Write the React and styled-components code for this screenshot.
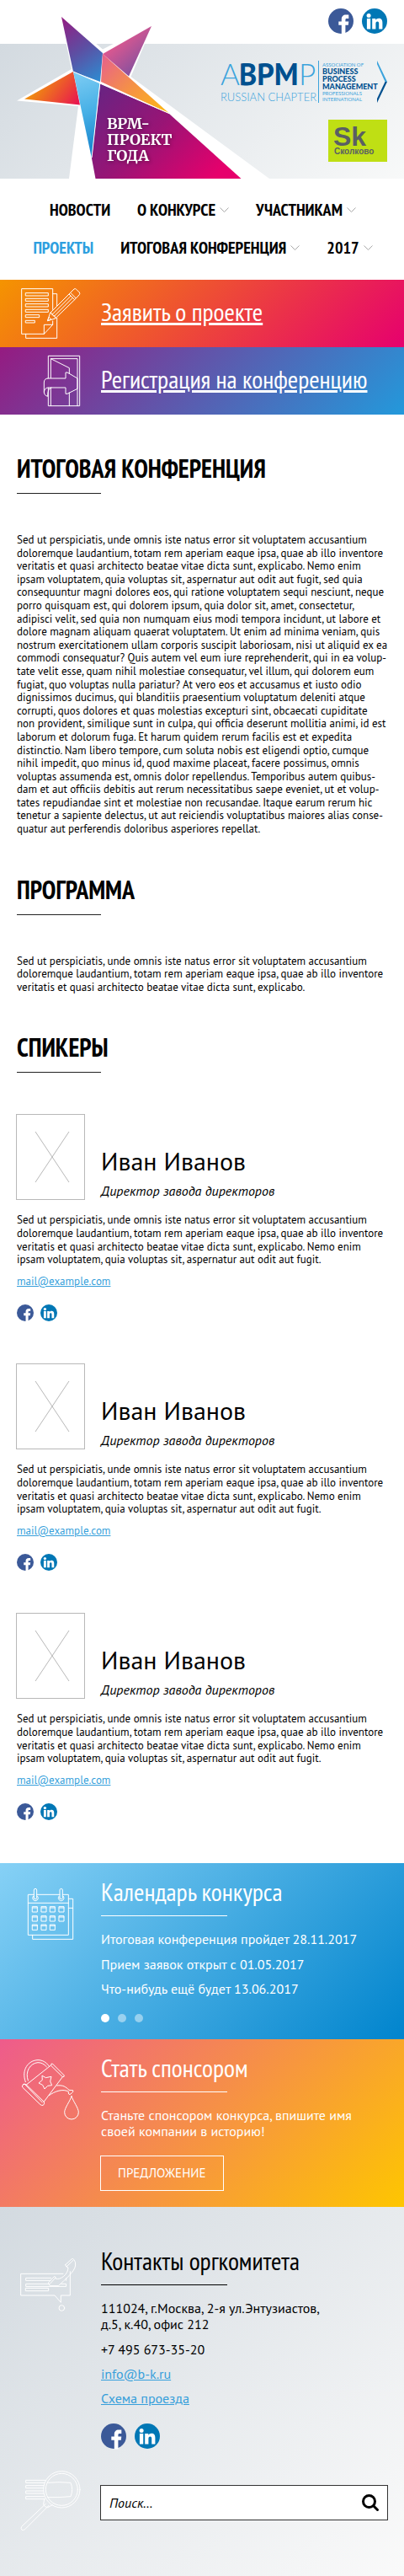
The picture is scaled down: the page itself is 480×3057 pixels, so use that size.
import React from "react";
import styled, { createGlobalStyle } from "styled-components";

const sans = `"PT Sans", "Noto Sans", "Liberation Sans", sans-serif`;
const narrow = `"PT Sans Narrow", "PT Sans", "Noto Sans", sans-serif`;
const serif = `Merriweather, "PT Serif", "DejaVu Serif", serif`;

const GlobalStyle = createGlobalStyle`
  *, *::before, *::after { box-sizing: border-box; }
  body { margin: 0; background: #fff; color: #000; font: 13px/1.2 ${sans}; text-rendering: optimizeLegibility; }
  h1, h2, h3, p, ul { margin: 0; padding: 0; }
  ul { list-style: none; }
  svg { display: block; overflow: visible; }
`;

const Header = styled.header`
  position: relative;
`;
const TopBar = styled.div`
  display: flex;
  justify-content: flex-end;
  padding: 10px 20px 12px;
`;
const Hero = styled.div`
  display: flex;
  flex-direction: column;
  align-items: flex-end;
  gap: 20px;
  padding: 20px;
  background: linear-gradient(135deg, #d3dae0, #f8f9f9);
`;
const Brand = styled.a`
  position: absolute;
  left: 20px;
  bottom: 0;
`;
const SocialList = styled.ul`
  display: flex;
  gap: ${(p) => (p.$small ? 8 : 10)}px;
`;

const Nav = styled.nav`
  display: flex;
  flex-wrap: wrap;
  justify-content: center;
  gap: 21px 32px;
  padding: 25px 18px 26px 20px;
`;
const NavLink = styled.a`
  display: flex;
  align-items: center;
  gap: 5px;
  font: bold 20px/24px ${narrow};
  text-transform: uppercase;
  text-decoration: none;
  color: ${(p) => (p.$active ? "#2e9fdf" : "#000")};
`;

const IconCell = styled.div`
  flex: none;
  width: 120px;
  padding: ${(p) => p.$top || 0}px 20px 0;
  svg { fill: none; stroke: #fff; stroke-width: 3; stroke-linejoin: round; stroke-linecap: round; }
`;
const Band = styled.div`
  display: flex;
  height: 80px;
  background: linear-gradient(135deg, ${(p) => p.$from}, ${(p) => p.$to});
`;
const BandLink = styled.a`
  padding-top: 20px;
  font: 30px/36px ${narrow};
  color: #fff;
`;

const Section = styled.section`
  padding: 46px 16px 0 20px;
`;
const Title = styled.h2`
  font: bold 30px/36px ${narrow};
  text-transform: uppercase;
  &::after {
    content: "";
    display: block;
    width: 100px;
    height: 1px;
    margin-top: 11px;
    background: #222;
  }
`;
const Text = styled.p`
  margin-top: 47px;
`;
const Speakers = styled.div`
  display: flex;
  flex-direction: column;
  gap: 51px;
  padding: 50px 0 51px;
`;
const SpeakerCard = styled.article`
  display: flex;
  flex-direction: column;
`;
const SpeakerHead = styled.div`
  display: flex;
  align-items: flex-end;
  gap: 20px;
  margin-bottom: 17px;
`;
const Photo = styled.div`
  width: 80px;
  height: 100px;
  box-shadow: 0 0 0 1px #b8b8b8;
`;
const Name = styled.h3`
  margin-bottom: 8px;
  font: 30px/36px ${sans};
`;
const Role = styled.p`
  font: italic 16px/1.2 ${sans};
`;
const Mail = styled.a`
  align-self: flex-start;
  margin: 10px 0 20px;
  color: #369fdb;
`;

const Panel = styled.section`
  display: flex;
  padding: ${(p) => p.$top || 16}px 20px 20px 0;
  font-size: 16px;
  color: #fff;
  background: linear-gradient(135deg, ${(p) => p.$from}, ${(p) => p.$to});
`;
const PanelBody = styled.div`
  flex: 1;
  min-width: 0;
`;
const PanelTitle = styled.h2`
  margin-bottom: 18px;
  font: 30px/36px ${narrow};
  &::after {
    content: "";
    display: block;
    width: 150px;
    height: 1px;
    margin-top: 10px;
    background: currentColor;
  }
`;
const Lines = styled.div`
  display: flex;
  flex-direction: column;
  align-items: flex-start;
  gap: 10px;
  margin-bottom: 20px;
  a { color: #369fdb; }
`;
const Dots = styled.div`
  display: flex;
  gap: 10px;
`;
const Dot = styled.button`
  width: 10px;
  height: 10px;
  padding: 0;
  border: 0;
  border-radius: 50%;
  background: ${(p) => (p.$active ? "#fff" : "rgba(255, 255, 255, 0.45)")};
`;
const OfferButton = styled.button`
  height: 40px;
  padding: 0 20px;
  border: 0;
  background: none;
  box-shadow: 0 0 0 1px #fff;
  color: #fff;
  font: 15px/20px ${sans};
  text-transform: uppercase;
`;

const Footer = styled.footer`
  padding-bottom: 48px;
  color: #000;
  background: linear-gradient(135deg, #d3dae0, #fafafa);
`;
const FooterPanel = styled(Panel)`
  color: #000;
  background: none;
  padding-bottom: 24px;
`;
const SearchRow = styled.form`
  display: flex;
  align-items: center;
  padding-right: 20px;
`;
const SearchBox = styled.div`
  flex: 1;
  display: flex;
  align-items: center;
  height: 40px;
  padding: 0 10px;
  background: #fff;
  box-shadow: 0 0 0 1px #333;
`;
const SearchInput = styled.input`
  flex: 1;
  min-width: 0;
  padding: 0;
  border: 0;
  outline: 0;
  background: none;
  font: italic 16px/20px ${sans};
  color: #000;
  &::placeholder { color: #000; opacity: 1; }
`;
const SearchButton = styled.button`
  padding: 0;
  border: 0;
  background: none;
`;

const lorem =
  "Sed ut perspiciatis, unde omnis iste natus error sit voluptatem accusantium doloremque laudantium, totam rem aperiam eaque ipsa, quae ab illo inventore veritatis et quasi architecto beatae vitae dicta sunt, explicabo.";
const longLorem =
  lorem +
  " Nemo enim ipsam voluptatem, quia voluptas sit, aspernatur aut odit aut fugit, sed quia consequuntur magni dolores eos, qui ratione voluptatem sequi nesciunt, neque porro quisquam est, qui dolorem ipsum, quia dolor sit, amet, consectetur, adipisci velit, sed quia non numquam eius modi tempora incidunt, ut labore et dolore magnam aliquam quaerat voluptatem. Ut enim ad minima veniam, quis nostrum exercitationem ullam corporis suscipit laboriosam, nisi ut aliquid ex ea commodi consequatur? Quis autem vel eum iure reprehenderit, qui in ea volup\u00adtate velit esse, quam nihil molestiae consequatur, vel illum, qui dolorem eum fugiat, quo voluptas nulla pariatur? At vero eos et accusamus et iusto odio dignissimos ducimus, qui blanditiis praesentium voluptatum deleniti atque corrupti, quos dolores et quas molestias excepturi sint, obcaecati cupiditate non\u00a0provident, similique sunt in culpa, qui officia deserunt mollitia animi, id est laborum et dolorum fuga. Et harum quidem rerum facilis est et expedita distinctio. Nam libero tempore, cum soluta nobis est eligendi optio, cumque nihil impedit, quo minus id, quod maxime placeat, facere possimus, omnis voluptas assumenda est, omnis dolor repellendus. Temporibus autem quibus\u00addam et aut officiis debitis aut rerum necessitatibus saepe eveniet, ut et volup\u00adtates repudiandae sint et molestiae non recusandae. Itaque earum rerum hic tenetur a sapiente delectus, ut aut reiciendis voluptatibus maiores alias conse\u00adquatur aut perferendis doloribus asperiores repellat.";
const speakerBio = lorem + " Nemo enim ipsam voluptatem, quia voluptas sit, aspernatur aut odit aut fugit.";

const speakers = [1, 2, 3].map((id) => ({ id, name: "Иван Иванов", role: "Директор завода директоров", mail: "mail@example.com" }));

const menu = [
  { label: "Новости" },
  { label: "О конкурсе", sub: true },
  { label: "Участникам", sub: true },
  { label: "Проекты", active: true },
  { label: "Итоговая конференция", sub: true },
  { label: "2017", sub: true },
];

function Socials({ small }) {
  const size = small ? 20 : 30;
  return (
    <SocialList $small={small}>
      <li>
        <a href="#facebook" aria-label="Facebook">
          <svg width={size} height={size} viewBox="0 0 30 30">
            <circle cx="15" cy="15" r="15" fill="#3b5998" />
            <path fill="#fff" d="M15.8 30.5V19.7h-3.5v-4.2h3.5V13c0-3.6 2-5.5 5.2-5.5h3.3V12H22c-1.2 0-1.6.6-1.6 1.6v1.9h3.9l-.5 4.2h-3.4v10.8z" />
          </svg>
        </a>
      </li>
      <li>
        <a href="#linkedin" aria-label="LinkedIn">
          <svg width={size} height={size} viewBox="0 0 30 30">
            <circle cx="15" cy="15" r="15" fill="#0077b5" />
            <circle cx="8.1" cy="8.4" r="2.5" fill="#fff" />
            <path fill="#fff" d="M5.9 12.1h4.3v12.3H5.9zM12.2 12.1h4.1v1.7c.8-1.3 2.1-2 3.8-2 3.2 0 4.3 2.1 4.3 5.2v7.4h-4.2v-6.6c0-1.5-.5-2.4-1.8-2.4s-2 .9-2 2.4v6.6h-4.2z" />
          </svg>
        </a>
      </li>
    </SocialList>
  );
}

const Gradient = ({ id, box, stops }) => (
  <linearGradient id={id} gradientUnits="userSpaceOnUse" x1={box[0]} y1={box[1]} x2={box[2]} y2={box[3]}>
    {stops.map((c, i) => (
      <stop key={c} offset={i / (stops.length - 1)} stopColor={c} />
    ))}
  </linearGradient>
);

const BrandText = styled.text`
  font: bold 18px ${serif};
  fill: #fff;
  filter: drop-shadow(1px 1px 2px rgba(0, 0, 0, 0.4));
`;

function StarLogo() {
  return (
    <svg width="300" height="200" viewBox="20 12 300 200" role="img" aria-label="ВРМ-проект года">
      <defs>
        <Gradient id="top" box={[73, 20, 125, 95]} stops={["#951b81", "#5c4fa3", "#2b8fd4"]} />
        <Gradient id="right" box={[135, 50, 165, 85]} stops={["#e2588f", "#80509f"]} />
        <Gradient id="gold" box={[122, 64, 200, 134]} stops={["#e8608c", "#f59245", "#fdb913"]} />
        <Gradient id="left" box={[50, 95, 90, 125]} stops={["#f08a10", "#e8174f"]} />
        <Gradient id="blue" box={[88, 85, 120, 180]} stops={["#7fcdf4", "#47b0e6", "#1482cc"]} />
        <Gradient id="body" box={[115, 100, 240, 225]} stops={["#662483", "#991475", "#e6006c"]} />
      </defs>
      <path fill="#fff" d="M20 119.500 85 82 71 15 122 58.500 182 28 155.500 91 320 212H82l11-86z" />
      <path fill="url(#top)" d="M73 20 122 63 119 97 87 85z" />
      <path fill="url(#right)" d="M180 31 153 90.500 122 64z" />
      <path fill="url(#gold)" d="M122 64 201 134.500 120 97z" />
      <path fill="url(#left)" d="M29 117.500 87 85 95 124.500z" />
      <path fill="url(#blue)" d="M87 85 118.500 98.500 109 188z" />
      <path fill="url(#body)" d="M119 99.500 201 135 286.500 212H113.500L109 188z" />
      <path fill="none" stroke="#fff" strokeWidth="1" d="M87 85 201 134.500M119 97l-10 90" />
      <BrandText x="127" y="153">ВРМ-</BrandText>
      <BrandText x="127" y="172">ПРОЕКТ</BrandText>
      <BrandText x="127" y="191">ГОДА</BrandText>
    </svg>
  );
}

const LogoText = styled.text`
  font: ${(p) => p.$weight || 400} ${(p) => p.$size}px Lato, ${sans};
  fill: ${(p) => (p.$dark ? "#00508f" : "#3ba3dc")};
`;
const LogoMark = styled.text`
  font: bold 36px ${sans};
  fill: #00508f;
`;

function AbpmpLogo() {
  return (
    <svg width="197" height="50" viewBox="263 72 197 50" role="img" aria-label="ABPMP Russian Chapter">
      <LogoText $size={35} $weight={300} x="262" y="101">A</LogoText>
      <LogoMark x="284" y="101">BPM</LogoMark>
      <LogoText $size={35} $weight={300} x="355" y="101">P</LogoText>
      <LogoText $size={13} $weight={300} x="262" y="120">RUSSIAN CHAPTER</LogoText>
      <path stroke="#3ba3dc" d="M378.500 72v50" />
      <LogoText $size={6} x="383" y="79">ASSOCIATION OF</LogoText>
      <LogoText $size={9} $weight={900} $dark x="383" y="88">BUSINESS</LogoText>
      <LogoText $size={9} $weight={900} $dark x="383" y="97">PROCESS</LogoText>
      <LogoText $size={9} $weight={900} $dark x="383" y="106">MANAGEMENT</LogoText>
      <LogoText $size={6} x="383" y="113">PROFESSIONALS</LogoText>
      <LogoText $size={6} x="383" y="120">INTERNATIONAL</LogoText>
      <path fill="#3ba3dc" d="M448 72 460 97h-2.500L448 76z" />
      <path fill="#00508f" d="M460 97 448 122v-5l9.500-20z" />
    </svg>
  );
}

const SkText = styled.text`
  font: bold ${(p) => p.$size}px "Liberation Sans", sans-serif;
  fill: #5a5f63;
`;

function SkolkovoLogo() {
  return (
    <svg width="70" height="50" viewBox="0 0 70 50" role="img" aria-label="Сколково">
      <path fill="#bfdf14" d="M0 0h70v50H0z" />
      <SkText $size={32} x="6" y="31">Sk</SkText>
      <SkText $size={10} x="7" y="41">Сколково</SkText>
    </svg>
  );
}

const Chevron = () => (
  <svg width="11" height="8" viewBox="0 0 11 8" fill="none" stroke="#a8a8a8" aria-hidden="true">
    <path d="M.5 1.500l5 5 5-5" />
  </svg>
);

const Icon = ({ view, children }) => (
  <svg width="80" height="80" viewBox={view} aria-hidden="true">{children}</svg>
);

const ProjectIcon = () => (
  <Icon view="30 6 240 240">
    <path d="M158 112V38H47v161h80l31-33v-13M127 199v-33h31M158 56h15v42M173 142v72H62v-15" />
    <path d="M62 53h80v10H62zM62 73h80v9H62zM62 92h80v10H62zM62 112h80v9H62zM62 131h48v9H62zM62 151h32v8H62z" />
    <path d="M140 151l9-27 67-67 20 20-68 66zM149 124l5 1 3 7 7 2 4 9M156 130l66-66M162 137l67-67M216 57l5-5 20 20-5 5M221 52l13-13q4-3 8 1l11 11q3 4 0 8l-12 13M140 151l4-12 8 7z" />
  </Icon>
);
const DoorIcon = () => (
  <Icon view="30 246 240 240">
    <path d="M142 356v-79h112v178H142v-64M151 356v-69h95v168M151 391v64M151 287l66 33v20M217 408v47" />
    <path d="M141 357h63v-21h6l36 21v37l-36 18h-6v-22h-51q-13 2-13 31-13-3-13-16v-33q0-15 14-15M127 405q2-14 14-15h12" />
  </Icon>
);
const CalendarIcon = () => (
  <Icon view="30 0 240 240">
    <path d="M91 55H70v144h144V55h-21M101 55h82M70 85h144M214 70h16v144H86v-15M214 103h16" />
    {[96, 188].map((x) => (
      <g key={x}>
        <path d={`M${x - 5} 68V39q0-5 5-5t5 5v29q0 3-5 3t-5-3z`} />
        <path d={`M${x - 8} 61a10 10 0 1 0 16 0`} />
      </g>
    ))}
    {[98, 131, 162].map((y, row) =>
      [86, 118, 149, 181].slice(0, row === 2 ? 3 : 4).map((x) => <path key={`${x}-${y}`} d={`M${x} ${y}h17v19h-17zM${x} ${y + 4}h17`} />)
    )}
  </Icon>
);
const SponsorIcon = () => (
  <Icon view="30 627 240 240">
    <path d="M152 663q-1-8 5-6l42 42q1 6-5 5zM150 664l-86 68M193 704l-66 88" />
    <path d="M53 731q7-4 12 2l62 60q3 7-3 12-6 2-11-3l-63-61q-3-6 3-10zM57 729l64 66" />
    <path d="M61 722c-16-42 9-77 44-78 17 0 30 8 40 22M70 717c-12-32 8-62 35-64 13 0 23 6 31 15" />
    <path d="M121 700l12 7 20-4-4 17 6 14-15 2-11 11-7-14-14-7 12-10z" />
    <path d="M173 735c22-3 32 5 43 16 4-1 8 2 14 1q3 5-4 9-4 7-10 5-4-4-1-9c-20-12-50-2-70 13" />
    <path d="M225 773c-5 17-25 42-25 57a25 25 0 0 0 50 0c0-15-20-40-25-57z" />
  </Icon>
);
const ContactIcon = () => (
  <Icon view="30 -3 240 240">
    <path d="M195 88H44v77h121l22 25v-25h33V80" />
    <path d="M150 112H62v-9h90M145 124H62v9h144v-9h-18M62 139h81v10H62zM206 112v-9" />
    <circle cx="190" cy="210" r="10" />
    <path d="M203 56l23-21q4-2 7 2 7 8 6 20c-1 23-39 53-61 74h-28q-10-5-7-12l20-21q7-1 5 7c17 7 45-15 45-39q-8-1-10-10zM208 62l23-22M148 124l19-21" />
  </Icon>
);
const MagnifierIcon = () => (
  <Icon view="30 780 240 240">
    <path d="M131 820H62v9h66M126 839H62v9h62M124 858H62v9h63M127 878H62v9h68" />
    <circle cx="190" cy="853" r="65" />
    <circle cx="190" cy="853" r="57" />
    <path d="M140 829q40-4 82 0 10 24 0 49-42 4-82 3M133 904l-86 81q-4 7 1 12 5 2 11-2l85-85M128 886l-3 20q3 10 15 11l17-9" />
  </Icon>
);

function Speaker({ person }) {
  return (
    <SpeakerCard>
      <SpeakerHead>
        <Photo>
          <svg width="80" height="100" viewBox="0 0 80 100" stroke="#b8b8b8" aria-hidden="true">
            <path d="M22 20l40 60M62 20 22 80" />
          </svg>
        </Photo>
        <div>
          <Name>{person.name}</Name>
          <Role>{person.role}</Role>
        </div>
      </SpeakerHead>
      <p>{speakerBio}</p>
      <Mail href={`mailto:${person.mail}`}>{person.mail}</Mail>
      <Socials small />
    </SpeakerCard>
  );
}

export default function App() {
  return (
    <>
      <GlobalStyle />
      <Header>
        <TopBar>
          <Socials />
        </TopBar>
        <Hero>
          <AbpmpLogo />
          <SkolkovoLogo />
        </Hero>
        <Brand href="#home">
          <StarLogo />
        </Brand>
      </Header>
      <Nav>
        {menu.map((m) => (
          <NavLink key={m.label} href="#menu" $active={m.active}>
            {m.label}
            {m.sub && <Chevron />}
          </NavLink>
        ))}
      </Nav>
      <Band $from="#f59400" $to="#e6006e">
        <IconCell><ProjectIcon /></IconCell>
        <BandLink href="#apply">Заявить о проекте</BandLink>
      </Band>
      <Band $from="#951b81" $to="#2399db">
        <IconCell><DoorIcon /></IconCell>
        <BandLink href="#register">Регистрация на конференцию</BandLink>
      </Band>
      <main>
        <Section>
          <Title>Итоговая конференция</Title>
          <Text>{longLorem}</Text>
        </Section>
        <Section>
          <Title>Программа</Title>
          <Text>{lorem}</Text>
        </Section>
        <Section>
          <Title>Спикеры</Title>
          <Speakers>
            {speakers.map((s) => (
              <Speaker key={s.id} person={s} />
            ))}
          </Speakers>
        </Section>
      </main>
      <Panel $from="#86d1f6" $to="#0084cd">
        <IconCell $top={3}><CalendarIcon /></IconCell>
        <PanelBody>
          <PanelTitle>Календарь конкурса</PanelTitle>
          <Lines>
            <p>Итоговая конференция пройдет 28.11.2017</p>
            <p>Прием заявок открыт с 01.05.2017</p>
            <p>Что-нибудь ещё будет 13.06.2017</p>
          </Lines>
          <Dots>
            {[1, 2, 3].map((n) => (
              <Dot key={n} $active={n === 1} aria-label={`Слайд ${n}`} />
            ))}
          </Dots>
        </PanelBody>
      </Panel>
      <Panel $from="#ee5b8c" $to="#fec600">
        <IconCell $top={3}><SponsorIcon /></IconCell>
        <PanelBody>
          <PanelTitle>Стать спонсором</PanelTitle>
          <Lines>
            <p>Станьте спонсором конкурса, впишите имя своей компании в историю!</p>
          </Lines>
          <OfferButton>Предложение</OfferButton>
        </PanelBody>
      </Panel>
      <Footer>
        <FooterPanel as="section" $top={46}>
          <IconCell $top={3}><ContactIcon /></IconCell>
          <PanelBody>
            <PanelTitle>Контакты оргкомитета</PanelTitle>
            <Lines>
              <p>111024, г.Москва, 2-я ул.Энтузиастов,<br />д.5, к.40, офис 212</p>
              <p>+7 495 673-35-20</p>
              <a href="mailto:info@b-k.ru">info@b-k.ru</a>
              <a href="#map">Схема проезда</a>
            </Lines>
            <Socials />
          </PanelBody>
        </FooterPanel>
        <SearchRow role="search">
          <IconCell><MagnifierIcon /></IconCell>
          <SearchBox>
            <SearchInput type="search" placeholder="Поиск…" aria-label="Поиск" />
            <SearchButton type="button" aria-label="Найти">
              <svg width="20" height="20" viewBox="0 0 20 20" fill="none" stroke="#000" strokeLinecap="round">
                <circle cx="8.500" cy="8.500" r="7" strokeWidth="3" />
                <path d="M14 14l4.500 4.500" strokeWidth="3" />
              </svg>
            </SearchButton>
          </SearchBox>
        </SearchRow>
      </Footer>
    </>
  );
}
